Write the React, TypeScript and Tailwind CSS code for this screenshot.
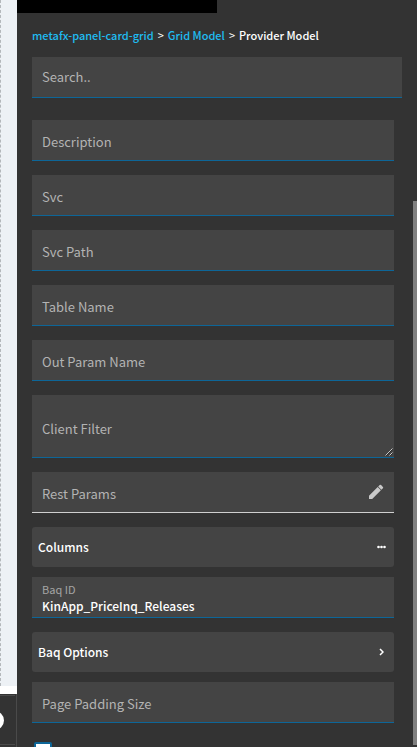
import React, { useState } from "react";

type FieldProps = {
  id: string;
  label: string;
};

function Field({ id, label }: FieldProps) {
  return (
    <div className="flex h-[41px] items-center border-b border-[#0d6698] bg-[#444444] px-2.5 pt-1">
      <input
        id={id}
        aria-label={label}
        placeholder={label}
        className="w-full min-w-0 bg-transparent text-[13px] leading-5 text-white outline-none placeholder:text-[#b3b3b3]"
      />
    </div>
  );
}

function CanvasEdge() {
  return (
    <div className="flex w-[17px] shrink-0 flex-col">
      <div className="flex-1 border-l border-dashed border-[#b4b8bb] bg-[#edf1f5]" />
      <div className="h-2 bg-white" />
      <div className="flex h-[53px] flex-col overflow-hidden border-r border-[#4a4a4a] bg-[#333333] pt-px">
        <div className="mr-px flex h-[50px] items-center border-y border-[#4a4a4a]">
          <div className="-ml-[15px] size-[19px] shrink-0 rounded-full bg-white" />
        </div>
      </div>
    </div>
  );
}

export default function App() {
  const [baqId, setBaqId] = useState("KinApp_PriceInq_Releases");

  return (
    <div className="flex h-screen overflow-hidden bg-[#333333] font-['Noto_Sans_CJK_SC','Noto_Sans',sans-serif] text-white">
      <CanvasEdge />
      <main className="min-w-0 flex-1 overflow-hidden">
        <div className="h-[13px] w-[200px] bg-black" />
        <nav aria-label="Breadcrumb" className="flex h-11 items-center gap-1 pl-[15px] text-[11px] leading-4 whitespace-nowrap">
          <a href="#panel" className="font-medium text-[#1fbcf2]">metafx-panel-card-grid</a>
          <span>&gt;</span>
          <a href="#grid" className="font-medium text-[#1fbcf2]">Grid Model</a>
          <span>&gt;</span>
          <span className="font-medium">Provider Model</span>
        </nav>
        <div className="mr-[11px] ml-[15px]">
          <div className="flex h-[41px] items-center border-b border-[#0d6698] bg-[#444444] px-2.5">
            <input
              type="search"
              aria-label="Search"
              placeholder="Search.."
              className="w-full min-w-0 bg-transparent text-[13px] leading-5 outline-none placeholder:text-[#b3b3b3]"
            />
          </div>
        </div>
        <form className="mt-[22px] mr-[19px] ml-[15px]">
          <div className="flex flex-col gap-3.5">
            <Field id="description" label="Description" />
            <Field id="svc" label="Svc" />
            <Field id="svc-path" label="Svc Path" />
            <Field id="table-name" label="Table Name" />
            <Field id="out-param" label="Out Param Name" />
            <div className="relative h-[63px] border-b border-[#0d6698] bg-[#444444]">
              <textarea
                aria-label="Client Filter"
                placeholder="Client Filter"
                className="block size-full resize-none bg-transparent px-2.5 pt-6 text-[13px] leading-5 outline-none placeholder:text-[#b3b3b3]"
              />
              <svg className="pointer-events-none absolute right-px bottom-px size-2" viewBox="0 0 8 8" fill="none" aria-hidden="true">
                <path d="M.5 7.5l7-7M4.5 7.5l3-3" stroke="#c8c8c8" />
                <path d="M1.500 7.500l6-6M5.500 7.500l2-2" stroke="#151515" strokeWidth=".6" />
              </svg>
            </div>
            <div className="flex h-[41px] items-center border-b border-[#d0d0d0] bg-[#444444] px-2.5">
              <input
                aria-label="Rest Params"
                placeholder="Rest Params"
                className="mt-1 min-w-0 flex-1 bg-transparent text-[13px] leading-5 outline-none placeholder:text-[#b3b3b3]"
              />
              <button type="button" aria-label="Edit rest params" className="shrink-0">
                <svg className="size-4" viewBox="0 0 16 16" fill="#c9c9c9" aria-hidden="true">
                  <path d="M1 11.800 9.700 3.100 12.900 6.300 4.200 15H1zM10.200 2.600 11.700 1.100q.7-.7 1.400 0l1.800 1.800q.7.7 0 1.400L13.400 5.800z" />
                </svg>
              </button>
            </div>
          </div>
          <div className="mt-3.5 flex flex-col">
            <button type="button" className="flex h-10 items-center justify-between rounded-[3px] bg-[#444444] pr-2 pl-1.5 text-xs leading-4 font-medium">
              Columns
              <svg className="h-1 w-[9px]" viewBox="0 0 9 4" fill="white" aria-hidden="true">
                <circle cx="1.500" cy="2" r="1.300" />
                <circle cx="4.500" cy="2" r="1.300" />
                <circle cx="7.500" cy="2" r="1.300" />
              </svg>
            </button>
            <div className="mt-2.5 flex h-[41px] flex-col border-b border-[#0d6698] bg-[#444444] px-2.5 pt-1">
              <label htmlFor="baq-id" className="text-[11px] leading-4 text-[#a5a5a5]">Baq ID</label>
              <input
                id="baq-id"
                value={baqId}
                onChange={(event) => setBaqId(event.target.value)}
                className="w-full bg-transparent text-xs leading-[18px] font-medium outline-none"
              />
            </div>
            <button type="button" className="mt-3.5 flex h-10 items-center justify-between rounded-[3px] bg-[#444444] pr-2.5 pl-1.5 text-xs leading-4 font-medium">
              Baq Options
              <svg className="h-2 w-[5px]" viewBox="0 0 5 8" fill="none" aria-hidden="true">
                <path d="m1 1 3 3-3 3" stroke="white" strokeWidth="1.500" />
              </svg>
            </button>
          </div>
          <div className="mt-2.5">
            <Field id="page-padding" label="Page Padding Size" />
          </div>
          <input
            type="checkbox"
            aria-label="Enable paging"
            className="mt-[19px] ml-0.5 block size-[18px] appearance-none rounded-xs border-2 border-[#0d6698] bg-white"
          />
        </form>
      </main>
      <div className="flex w-1 shrink-0 flex-col pt-[201px] pb-0.5" aria-hidden="true">
        <div className="flex-1 bg-[#808080]" />
      </div>
    </div>
  );
}
